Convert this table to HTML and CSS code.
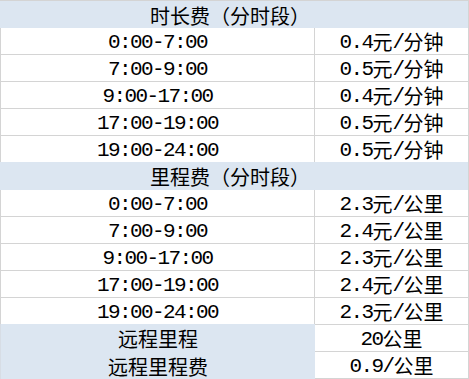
FILE: index.html
```html
<!DOCTYPE html>
<html lang="zh-CN">
<head>
<meta charset="utf-8">
<title>计费规则</title>
<link rel="stylesheet" href="styles.css">
</head>
<body>
<div class="sheet">
  <div class="band">时长费（分时段）</div>
  <div class="key num">0:00-7:00</div><div class="val"><span class="num">0.4</span>元<span class="num">/</span>分钟</div>
  <div class="key num">7:00-9:00</div><div class="val"><span class="num">0.5</span>元<span class="num">/</span>分钟</div>
  <div class="key num">9:00-17:00</div><div class="val"><span class="num">0.4</span>元<span class="num">/</span>分钟</div>
  <div class="key num">17:00-19:00</div><div class="val"><span class="num">0.5</span>元<span class="num">/</span>分钟</div>
  <div class="key num">19:00-24:00</div><div class="val"><span class="num">0.5</span>元<span class="num">/</span>分钟</div>
  <div class="band band-next">里程费（分时段）</div>
  <div class="key num">0:00-7:00</div><div class="val"><span class="num">2.3</span>元<span class="num">/</span>公里</div>
  <div class="key num">7:00-9:00</div><div class="val"><span class="num">2.4</span>元<span class="num">/</span>公里</div>
  <div class="key num">9:00-17:00</div><div class="val"><span class="num">2.3</span>元<span class="num">/</span>公里</div>
  <div class="key num">17:00-19:00</div><div class="val"><span class="num">2.4</span>元<span class="num">/</span>公里</div>
  <div class="key num">19:00-24:00</div><div class="val"><span class="num">2.3</span>元<span class="num">/</span>公里</div>
  <div class="label label-first">远程里程</div><div class="val"><span class="num">20</span>公里</div>
  <div class="label">远程里程费</div><div class="val"><span class="num">0.9/</span>公里</div>
</div>
</body>
</html>
```

FILE: styles.css
```css
html, body {
  margin: 0;
  padding: 0;
  background: #ffffff;
}

.sheet {
  display: grid;
  grid-template-columns: 315px 154px;
  grid-auto-rows: 27px;
  width: 469px;
  border-top: 1px solid #d4d4d4;
  font-family: "Noto Sans CJK SC", "Noto Sans", sans-serif;
  font-size: 20px;
  color: #000000;
}

.sheet > div {
  box-sizing: border-box;
  display: flex;
  align-items: center;
  justify-content: center;
  padding-top: 2px;
  line-height: 1;
  white-space: nowrap;
}

.num {
  font-family: "Liberation Mono", "DejaVu Sans Mono", monospace;
  font-size: 21px;
  letter-spacing: -1.6px;
}

.key {
  border-left: 1px solid #d4d4d4;
  border-right: 1px solid #d4d4d4;
  border-bottom: 1px solid #d4d4d4;
}

.val {
  border-right: 1px solid #d4d4d4;
  border-bottom: 1px solid #d4d4d4;
}

.band {
  grid-column: 1 / -1;
  background: #dce6f1;
  border-right: 1px solid #d4d4d4;
  padding-right: 8px;
}

.band-next {
  margin-top: -1px;
}

.label {
  background: #dce6f1;
  border-left: 1px solid #d7dde5;
}

.label-first {
  margin-top: -1px;
}
```
